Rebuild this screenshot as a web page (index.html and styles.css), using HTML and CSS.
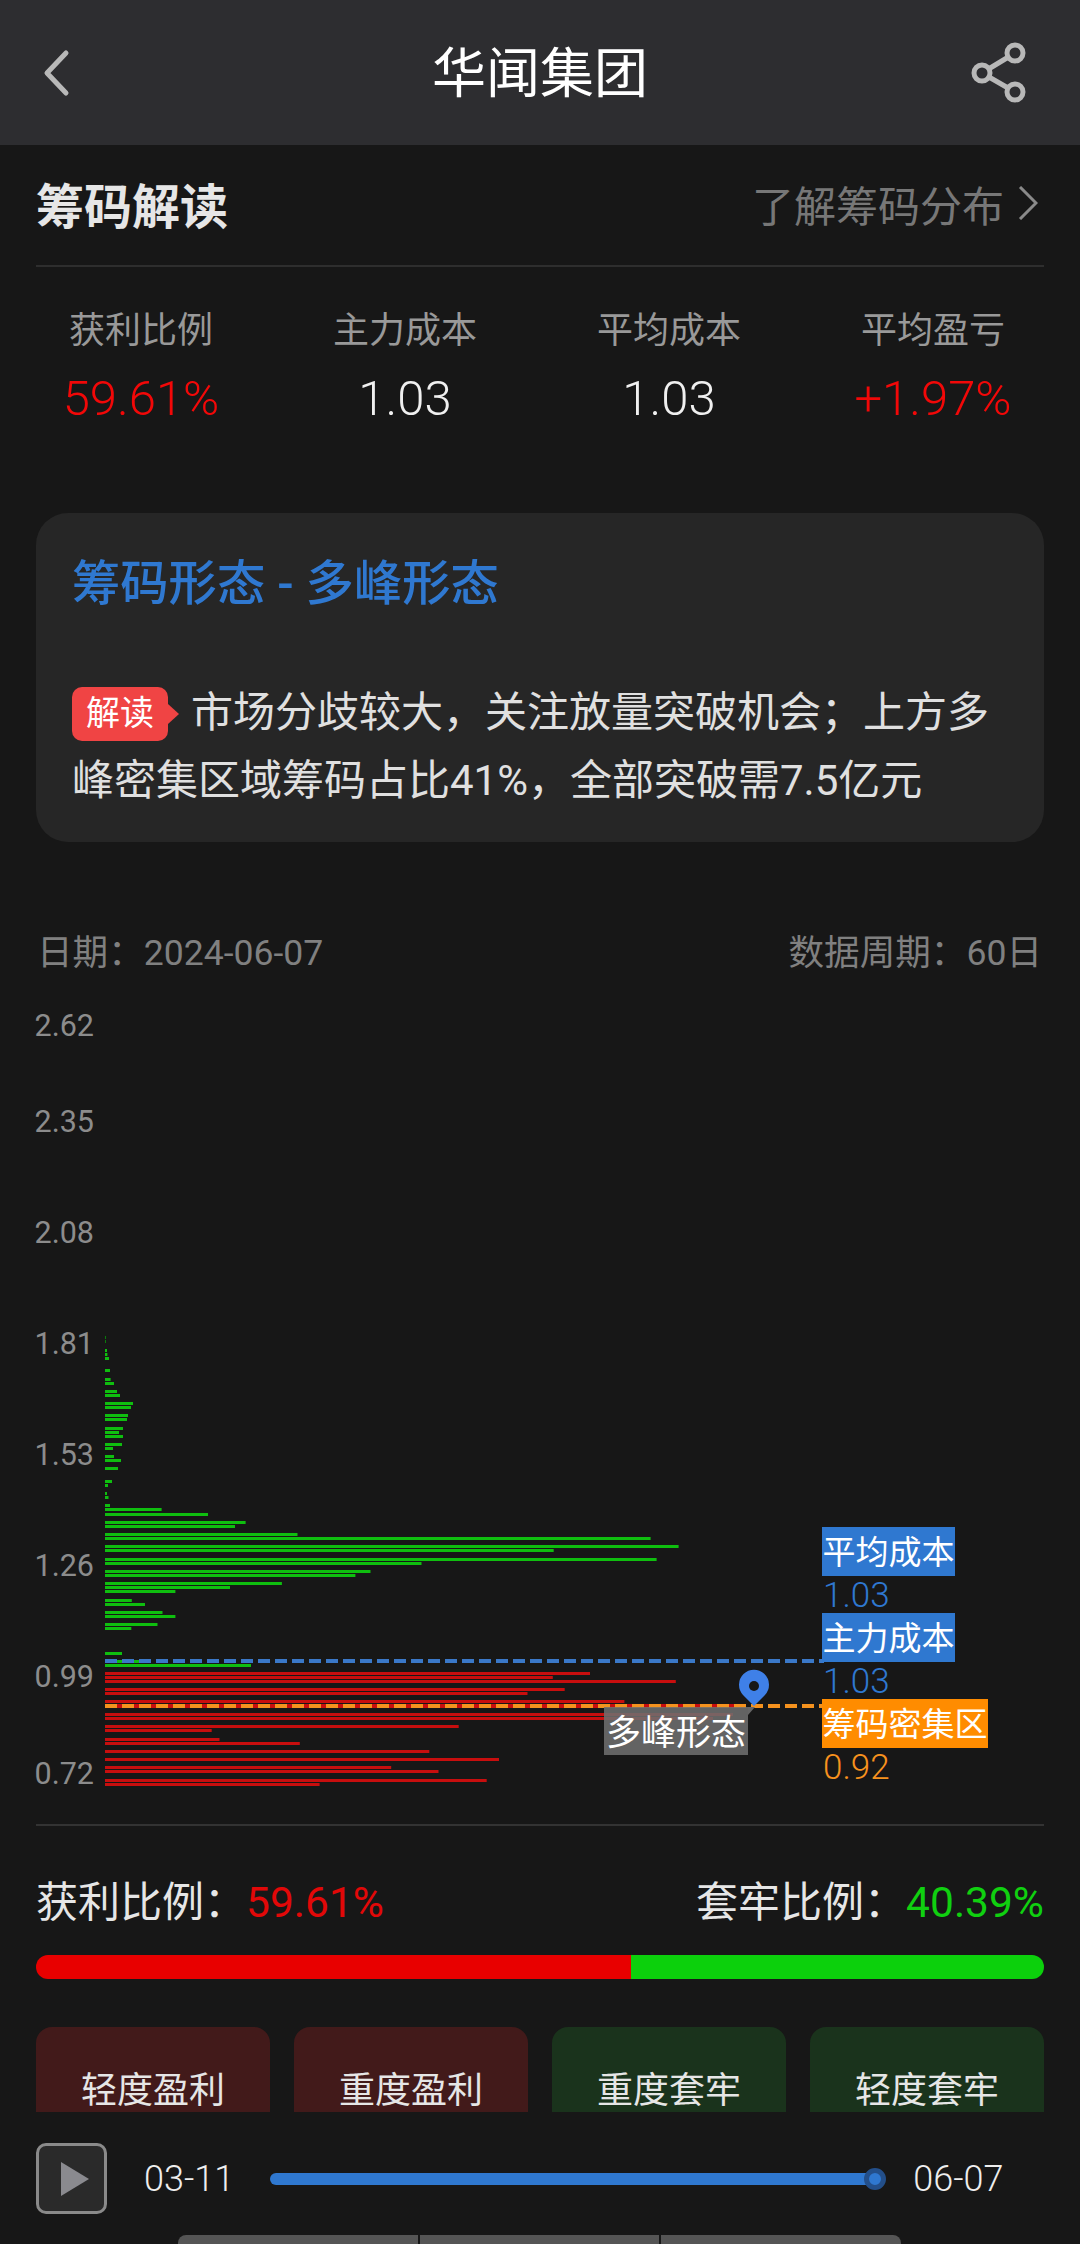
FILE: index.html
```html
<!DOCTYPE html>
<html lang="zh-CN">
<head>
    <meta charset="UTF-8">
    <meta name="viewport" content="width=device-width, initial-scale=1.0">
    <title>华闻集团 - 筹码解读</title>
    <link rel="stylesheet" href="styles.css">
</head>
<body>

    <div class="header">
        <svg class="header-icon" width="80" height="80" viewBox="0 0 80 80">
            <polyline class="line-icon" points="46,13 27,33 46,53"/>
        </svg>
        <div class="header-title">华闻集团</div>
        <svg class="header-icon" width="80" height="80" viewBox="0 0 80 80">
            <line class="line-icon" x1="16" y1="33" x2="49" y2="13"/>
            <line class="line-icon" x1="16" y1="33" x2="49" y2="52"/>
            <circle class="ring-icon" cx="49" cy="13" r="8"/>
            <circle class="ring-icon" cx="16" cy="33" r="8"/>
            <circle class="ring-icon" cx="49" cy="52" r="8"/>
        </svg>
    </div>

    <div class="main">
        <div class="section-head">
            <div class="section-title">筹码解读</div>
            <div class="section-link">了解筹码分布
                <svg width="20" height="34" viewBox="0 0 20 34"><polyline class="link-arrow" points="2,1 18,17 2,33"/></svg>
            </div>
        </div>

        <div class="stats">
            <div class="stat"><div class="stat-label">获利比例</div><div class="stat-value red">59.61%</div></div>
            <div class="stat"><div class="stat-label">主力成本</div><div class="stat-value">1.03</div></div>
            <div class="stat"><div class="stat-label">平均成本</div><div class="stat-value">1.03</div></div>
            <div class="stat"><div class="stat-label">平均盈亏</div><div class="stat-value red">+1.97%</div></div>
        </div>

        <div class="card">
            <div class="card-title">筹码形态 - 多峰形态</div>
            <p class="card-text"><span class="badge">解读</span>市场分歧较大，关注放量突破机会；上方多峰密集区域筹码占比41%，全部突破需7.5亿元</p>
        </div>

        <div class="date-row">
            <span>日期：2024-06-07</span>
            <span>数据周期：60日</span>
        </div>

        <div class="chart">
            <svg class="chart-svg" width="1080" height="846" viewBox="0 978 1080 846">
                <g class="axis">
                    <text x="94" y="1036">2.62</text>
                    <text x="94" y="1132">2.35</text>
                    <text x="94" y="1243">2.08</text>
                    <text x="94" y="1354">1.81</text>
                    <text x="94" y="1465">1.53</text>
                    <text x="94" y="1576">1.26</text>
                    <text x="94" y="1687">0.99</text>
                    <text x="94" y="1784">0.72</text>
                </g>
                <g class="bars-thin">
                    <rect x="105" y="1336" width="1" height="3"/>
                    <rect x="105" y="1340" width="1" height="3"/>
                </g>
                <g class="bars-green">
                    <rect x="105" y="1349" width="2" height="3"/>
                    <rect x="105" y="1353" width="2.4" height="3"/>
                    <rect x="105" y="1357" width="4" height="3"/>
                    <rect x="105" y="1369" width="5" height="3"/>
                    <rect x="105" y="1378" width="5.6" height="3"/>
                    <rect x="105" y="1382" width="9" height="3"/>
                    <rect x="105" y="1390" width="12" height="3"/>
                    <rect x="105" y="1394" width="15" height="3"/>
                    <rect x="105" y="1402" width="28" height="3"/>
                    <rect x="105" y="1406" width="26" height="3"/>
                    <rect x="105" y="1414" width="23" height="3"/>
                    <rect x="105" y="1418" width="22" height="3"/>
                    <rect x="105" y="1427" width="18" height="3"/>
                    <rect x="105" y="1431" width="14" height="3"/>
                    <rect x="105" y="1435" width="18" height="3"/>
                    <rect x="105" y="1443" width="17" height="3"/>
                    <rect x="105" y="1447" width="8" height="3"/>
                    <rect x="105" y="1455" width="9" height="3"/>
                    <rect x="105" y="1459" width="16" height="3"/>
                    <rect x="105" y="1467" width="13" height="3"/>
                    <rect x="105" y="1480" width="7" height="3"/>
                    <rect x="105" y="1484" width="3" height="3"/>
                    <rect x="105" y="1492" width="2" height="3"/>
                    <rect x="105" y="1496" width="3.5" height="3"/>
                    <rect x="105" y="1504" width="5" height="3"/>
                    <rect x="105" y="1508" width="56.6" height="3"/>
                    <rect x="105" y="1513" width="103" height="3"/>
                    <rect x="105" y="1521" width="140.6" height="3"/>
                    <rect x="105" y="1525" width="130" height="3"/>
                    <rect x="105" y="1533" width="192.5" height="3"/>
                    <rect x="105" y="1537" width="545.6" height="3"/>
                    <rect x="105" y="1545" width="573.6" height="3"/>
                    <rect x="105" y="1549" width="448.7" height="3"/>
                    <rect x="105" y="1558" width="551.6" height="3"/>
                    <rect x="105" y="1562" width="316.5" height="3"/>
                    <rect x="105" y="1570" width="265.5" height="3"/>
                    <rect x="105" y="1574" width="250.4" height="3"/>
                    <rect x="105" y="1582" width="176.9" height="3"/>
                    <rect x="105" y="1586" width="125" height="3"/>
                    <rect x="105" y="1590" width="70.4" height="3"/>
                    <rect x="105" y="1599" width="26.8" height="3"/>
                    <rect x="105" y="1603" width="40" height="3"/>
                    <rect x="105" y="1611" width="57.5" height="3"/>
                    <rect x="105" y="1615" width="70.4" height="3"/>
                    <rect x="105" y="1623" width="52.5" height="3"/>
                    <rect x="105" y="1627" width="26.3" height="3"/>
                    <rect x="105" y="1652" width="17" height="3"/>
                    <rect x="105" y="1660" width="40" height="3"/>
                    <rect x="105" y="1664" width="146" height="3"/>
                </g>
                <g class="bars-red">
                    <rect x="105" y="1672" width="485" height="3"/>
                    <rect x="105" y="1676" width="447.8" height="3"/>
                    <rect x="105" y="1680" width="570.8" height="3"/>
                    <rect x="105" y="1688" width="459.7" height="3"/>
                    <rect x="105" y="1692" width="422.5" height="3"/>
                    <rect x="105" y="1700" width="519.4" height="3"/>
                    <rect x="105" y="1704" width="635" height="4"/>
                    <rect x="105" y="1713" width="628" height="3"/>
                    <rect x="105" y="1717" width="608" height="3"/>
                    <rect x="105" y="1725" width="353.7" height="3"/>
                    <rect x="105" y="1729" width="106.7" height="3"/>
                    <rect x="105" y="1738" width="114.5" height="3"/>
                    <rect x="105" y="1742" width="194.8" height="3"/>
                    <rect x="105" y="1750" width="324.3" height="3"/>
                    <rect x="105" y="1758" width="394" height="3"/>
                    <rect x="105" y="1766" width="286.2" height="3"/>
                    <rect x="105" y="1770" width="333.5" height="3"/>
                    <rect x="105" y="1779" width="381.7" height="3"/>
                    <rect x="105" y="1783" width="214.6" height="3"/>
                </g>
                <line class="dash-blue" x1="105" y1="1661" x2="824" y2="1661"/>
                <line class="dash-orange" x1="105" y1="1706" x2="824" y2="1706"/>
                <path class="pin" d="M754 1706 L743 1695 A15 15 0 1 1 765 1695 Z"/>
                <circle class="pin-hole" cx="754" cy="1686" r="5"/>
                <polygon class="tag-tip" points="748,1707 755,1707 748,1715"/>
            </svg>

            <div class="peak-tag">多峰形态</div>

            <div class="marks">
                <div class="mark">
                    <div class="mark-label bg-blue">平均成本</div>
                    <div class="mark-value blue">1.03</div>
                </div>
                <div class="mark">
                    <div class="mark-label bg-blue">主力成本</div>
                    <div class="mark-value blue">1.03</div>
                </div>
                <div class="mark">
                    <div class="mark-label bg-orange">筹码密集区</div>
                    <div class="mark-value orange">0.92</div>
                </div>
            </div>
        </div>
        <div class="chart-rule"></div>

        <div class="ratio-row">
            <div>获利比例：<span class="ratio-value red">59.61%</span></div>
            <div>套牢比例：<span class="ratio-value green">40.39%</span></div>
        </div>

        <div class="ratio-bar">
            <div class="ratio-red"></div>
            <div class="ratio-green"></div>
        </div>

        <div class="tabs">
            <div class="tab tab-red">轻度盈利</div>
            <div class="tab tab-red">重度盈利</div>
            <div class="tab tab-green">重度套牢</div>
            <div class="tab tab-green">轻度套牢</div>
        </div>
    </div>

    <div class="player">
        <div class="play-btn"><span class="play-arrow"></span></div>
        <div class="player-date">03-11</div>
        <div class="slider"><span class="slider-knob"></span></div>
        <div class="player-date">06-07</div>
    </div>

    <div class="handle">
        <span></span><span></span><span></span>
    </div>

</body>
</html>
```

FILE: styles.css
```css
body {
    font-family: Roboto, "Noto Sans CJK SC", sans-serif;
    background-color: #171717;
    width: 1080px;
    height: 2244px;
    margin: 0;
    overflow: hidden;
    color: #e6e6e6;
}
.red { color: #e20808; }
.green { color: #10d010; }
.blue { color: #2f78d0; }
.orange { color: #f7921e; }
.bg-blue { background: #2f78d0; }
.bg-orange { background: #ff8c00; }

/* header */
.header {
    height: 145px;
    background: #2d2d30;
    display: flex;
    justify-content: space-between;
    align-items: center;
    padding: 0 34px 0 20px;
    box-sizing: border-box;
}
.header-icon {
    margin-top: 15px;
}
.header-title {
    font-size: 54px;
    color: #fff;
    line-height: 70px;
    margin: 5px 0 0 14px;
}
.line-icon, .ring-icon {
    fill: none;
    stroke: #b8b8b8;
    stroke-width: 5;
    stroke-linecap: round;
    stroke-linejoin: round;
}
.ring-icon {
    fill: #2d2d30;
}

.main {
    height: 1967px;
    overflow: hidden;
}

/* title row */
.section-head {
    margin: 0 36px;
    height: 116px;
    padding-bottom: 4px;
    border-bottom: 2px solid #2e2e2e;
    display: flex;
    justify-content: space-between;
    align-items: center;
}
.section-title {
    font-size: 48px;
    font-weight: bold;
}
.section-link {
    font-size: 42px;
    color: #777;
    display: flex;
    align-items: center;
    gap: 14px;
    margin-right: 6px;
}
.link-arrow {
    fill: none;
    stroke: #8a8a8a;
    stroke-width: 3;
}

/* stats */
.stats {
    display: grid;
    grid-template-columns: repeat(4, 264px);
    padding: 41px 0 0 9px;
    text-align: center;
}
.stat-label {
    font-size: 36px;
    color: #999;
    line-height: 46px;
}
.stat-value {
    font-size: 49px;
    font-weight: 300;
    line-height: 56px;
    margin-top: 17px;
    color: #f0f0f0;
}
.stat-value.red { color: #f20808; }

/* card */
.card {
    margin: 86px 36px 0;
    height: 329px;
    background: #262626;
    border-radius: 32px;
    padding: 40px 36px 0;
    box-sizing: border-box;
}
.card-title {
    font-size: 48.3px;
    font-weight: 500;
    line-height: 62px;
    color: #2f78d0;
}
.card-text {
    margin: 64px 0 0;
    font-size: 42px;
    line-height: 68px;
    color: #e0e0e0;
}
.badge {
    display: inline-block;
    position: relative;
    width: 96px;
    height: 54px;
    line-height: 52px;
    margin-right: 23px;
    background: #f04444;
    border-radius: 10px;
    font-size: 34px;
    color: #fff;
    text-align: center;
    vertical-align: 2px;
}
.badge::after {
    content: "";
    position: absolute;
    right: -11px;
    top: 17px;
    border-left: 11px solid #f04444;
    border-top: 10px solid transparent;
    border-bottom: 10px solid transparent;
}

/* date row */
.date-row {
    margin: 86px 38px 0 37px;
    height: 50px;
    line-height: 50px;
    display: flex;
    justify-content: space-between;
    font-size: 35.6px;
    color: #808080;
}

/* chart */
.chart {
    position: relative;
    height: 846px;
}
.chart-svg {
    display: block;
}
.chart-rule {
    margin: 0 36px;
    height: 2px;
    background: #333;
}
.axis text {
    font-family: Roboto, sans-serif;
    font-size: 30.5px;
    fill: #8c8c8c;
    text-anchor: end;
}
.bars-thin { fill: #0a7a0a; }
.bars-green { fill: #0fbe0f; }
.bars-red { fill: #c80e0e; }
.dash-blue, .dash-orange {
    stroke-width: 4;
    stroke-dasharray: 12 5;
}
.dash-blue { stroke: #3a78c8; }
.dash-orange { stroke: #f5921e; }
.pin { fill: #3f80e8; }
.pin-hole { fill: #171717; }
.tag-tip { fill: #666; }

.peak-tag {
    position: absolute;
    left: 604px;
    top: 729px;
    width: 144px;
    height: 48px;
    line-height: 54px;
    background: rgba(110, 110, 110, 0.88);
    font-size: 35px;
    color: #fff;
    text-align: center;
}
.marks {
    position: absolute;
    left: 822px;
    top: 549px;
    display: flex;
    flex-direction: column;
    align-items: flex-start;
}
.mark-label {
    height: 49px;
    line-height: 51px;
    padding: 0 0.5px;
    font-size: 33px;
    color: #fff;
}
.mark-value {
    height: 37px;
    line-height: 39px;
    padding-left: 1px;
    font-size: 35px;
    font-weight: 300;
}

/* profit ratio */
.ratio-row {
    margin: 52px 36px 0;
    height: 50px;
    line-height: 50px;
    display: flex;
    justify-content: space-between;
    font-size: 42px;
    color: #e6e6e6;
}
.ratio-value {
    font-size: 42.5px;
}
.ratio-bar {
    margin: 27px 36px 0;
    height: 24px;
    display: flex;
    border-radius: 12px;
    overflow: hidden;
}
.ratio-red {
    width: 595px;
    background: #e80000;
}
.ratio-green {
    flex: 1;
    background: #0cd00c;
}

/* tabs, cut off by the player */
.tabs {
    margin: 48px 36px 0;
    display: grid;
    grid-template-columns: repeat(4, 234px);
    column-gap: 24px;
}
.tab {
    height: 110px;
    padding-top: 39px;
    box-sizing: border-box;
    border-radius: 16px 16px 0 0;
    font-size: 36px;
    line-height: 50px;
    text-align: center;
    color: #e6e6e6;
}
.tab-red { background: #421a1a; }
.tab-green { background: #1a331c; }

/* player */
.player {
    height: 123px;
    display: flex;
    align-items: center;
    padding: 10px 44px 0 36px;
    box-sizing: border-box;
}
.play-btn {
    width: 71px;
    height: 71px;
    box-sizing: border-box;
    border: 3px solid #8a8a8a;
    border-radius: 10px;
    background: #2a2a2a;
    display: flex;
    align-items: center;
    justify-content: center;
}
.play-arrow {
    width: 0;
    height: 0;
    margin-left: 6px;
    border-left: 28px solid #8a8a8f;
    border-top: 17px solid transparent;
    border-bottom: 17px solid transparent;
}
.player-date {
    font-size: 36px;
    font-weight: 300;
    color: #eee;
}
.play-btn + .player-date {
    margin-left: 37px;
}
.slider {
    position: relative;
    width: 610px;
    height: 12px;
    margin: 0 33px 0 36px;
    border-radius: 6px;
    background: #2f78d0;
}
.slider-knob {
    position: absolute;
    right: -6px;
    top: -5px;
    width: 12px;
    height: 12px;
    border: 5px solid #234f8a;
    border-radius: 50%;
    background: #2f78d0;
}

/* bottom handle */
.handle {
    margin-left: 178px;
    width: 723px;
    height: 20px;
    display: flex;
    gap: 2px;
    border-radius: 8px 8px 0 0;
    overflow: hidden;
}
.handle span {
    flex: 1;
    background: #555;
}
```
